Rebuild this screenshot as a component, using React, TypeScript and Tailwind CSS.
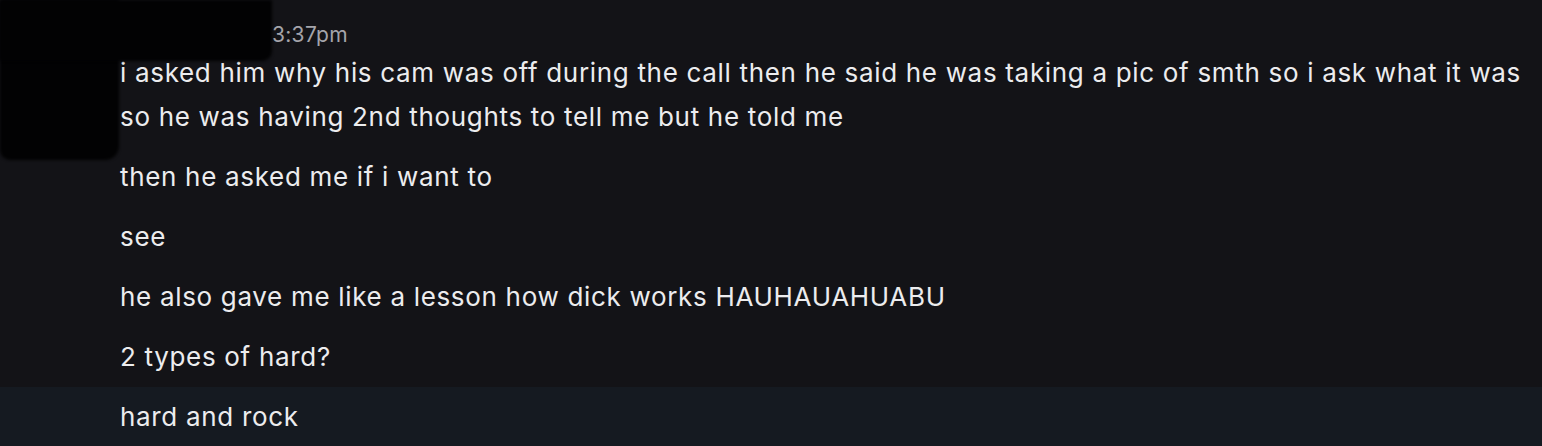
import React from "react";

const messages: { text: string; highlight?: boolean }[] = [
  {
    text:
      "i asked him why his cam was off during the call then he said he was taking a pic of smth so i ask what it was so he was having 2nd thoughts to tell me but he told me",
  },
  { text: "then he asked me if i want to" },
  { text: "see" },
  { text: "he also gave me like a lesson how dick works HAUHAUAHUABU" },
  { text: "2 types of hard?" },
  { text: "hard and rock", highlight: true },
];

export default function App() {
  return (
    <div
      className="relative w-[1542px] h-[446px] overflow-hidden bg-[#131317] text-[#ececee]"
      style={{ fontFamily: "Inter, 'Noto Sans', sans-serif" }}
    >
      <div className="flex flex-col">
        <div className="flex items-baseline pl-[120px] pt-[23px] h-[47px] leading-[24px]">
          <span className="w-[152px] text-[21px] font-semibold text-[#1a1a1e]">b</span>
          <span className="text-[21px] tracking-[0.3px] text-[#a4a4aa]">3:37pm</span>
        </div>
        {messages.map((m, i) => (
          <div
            key={i}
            className={
              (i === 0 ? "pt-[4px] pb-2 " : "py-2 ") +
              (m.highlight ? "bg-[#151a21] " : "") +
              "pl-[120px] pr-[16px] text-[26px] leading-[44px] tracking-[0.68px]"
            }
          >
            {m.text}
          </div>
        ))}
      </div>

      {/* redaction blob over avatar and name */}
      <div className="absolute left-0 top-0 w-[119px] h-[160px] bg-[#020203] rounded-br-[14px] rounded-bl-[10px] blur-[1.5px]" />
      <div className="absolute left-0 top-0 w-[272px] h-[61px] bg-[#020203] rounded-br-[10px] blur-[1.5px]" />
    </div>
  );
}
